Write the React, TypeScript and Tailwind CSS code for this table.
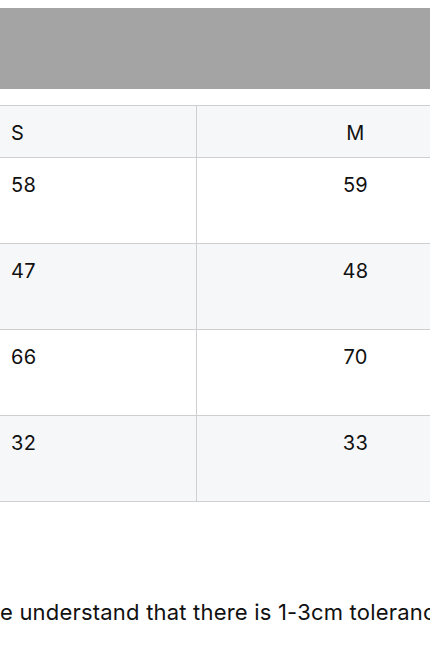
const rows = [
  { s: "58", m: "59", bg: "bg-white" },
  { s: "47", m: "48", bg: "bg-[#f6f7f9]" },
  { s: "66", m: "70", bg: "bg-white" },
  { s: "32", m: "33", bg: "bg-[#f6f7f9]" },
];

export default function App() {
  return (
    <div className="w-[430px] h-[645px] overflow-hidden bg-white text-[#111111] font-['Inter','Liberation_Sans',sans-serif] text-[20px] leading-[28px] tracking-[0.3px]">
      {/* banner placeholder */}
      <div className="mt-2 h-[81px] bg-[#a4a4a4]" />

      {/* size table */}
      <div className="mt-4 w-[514px] border-t-[1.5px] border-[#cfcfd1]">
        <div className="flex h-[52px] border-b-[1.5px] border-[#cfcfd1] bg-[#f6f7f9]">
          <div className="w-[197px] shrink-0 border-r-[1.5px] border-[#cfcfd1] pl-[11px] pt-[13px]">S</div>
          <div className="w-[317px] shrink-0 pt-[13px] text-center">M</div>
        </div>
        {rows.map((r) => (
          <div key={r.s} className={`flex h-[86px] border-b-[1.5px] border-[#cfcfd1] ${r.bg}`}>
            <div className="w-[197px] shrink-0 border-r-[1.5px] border-[#cfcfd1] pl-[11px] pt-[13px]">{r.s}</div>
            <div className="w-[317px] shrink-0 pt-[13px] text-center">{r.m}</div>
          </div>
        ))}
      </div>

      {/* note */}
      <p className="mt-[94px] whitespace-nowrap text-[22px] leading-[32px] tracking-[0.2px]">
        e understand that there is 1-3cm tolerance due to manual measurement.
      </p>
    </div>
  );
}
